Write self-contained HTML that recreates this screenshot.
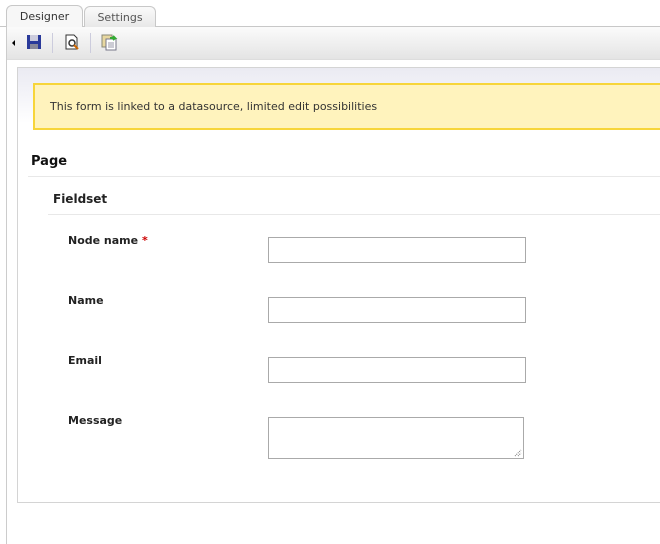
<!DOCTYPE html>
<html><head><style>
body{margin:0;width:660px;height:544px;background:#fff;position:relative;overflow:hidden;font-family:"DejaVu Sans","Liberation Sans",sans-serif;}
.a{position:absolute}
.tab{position:absolute;top:6px;height:20px;border:1px solid #c8c8c8;border-bottom:none;border-radius:6px 6px 0 0;font-size:11px;line-height:22px;text-align:center;color:#444}
.lbl{position:absolute;left:68px;font-size:11px;font-weight:bold;color:#222}
.inp{position:absolute;left:268px;width:256px;height:24px;border:1px solid #aaa;background:#fff}
</style></head><body>
<div class="a" style="left:6px;top:26px;width:1px;height:518px;background:#ccc"></div>
<div class="a" style="left:0;top:26px;width:660px;height:1px;background:#c8c8c8"></div>
<div class="tab" style="left:6px;width:75px;background:#f7f7f7;color:#333;height:21px;top:5px">Designer</div>
<div class="tab" style="left:84px;width:70px;background:linear-gradient(#fafafa,#e8e8e8);color:#555">Settings</div>
<div class="a" style="left:7px;top:27px;width:653px;height:32px;background:linear-gradient(#fbfbfb,#e4e4e4);border-bottom:1px solid #ddd"></div>
<div class="a" style="left:12px;top:40px;width:0;height:0;border-top:3px solid transparent;border-bottom:3px solid transparent;border-right:3px solid #000"></div>
<svg class="a" style="left:26px;top:34px" width="16" height="16"><rect x="1" y="1" width="14" height="14" fill="#2a3a9a"/><rect x="4" y="1" width="8" height="6" fill="#ccd"/><rect x="4" y="10" width="8" height="5" fill="#889"/></svg>
<div class="a" style="left:52px;top:33px;width:1px;height:20px;background:#ccd"></div>
<svg class="a" style="left:64px;top:34px" width="16" height="16"><path d="M2 1h8l3 3v11H2z" fill="#fff" stroke="#333"/><circle cx="8" cy="9" r="3" fill="none" stroke="#333" stroke-width="1.5"/><path d="M10 11l4 4" stroke="#c60" stroke-width="2"/></svg>
<div class="a" style="left:90px;top:33px;width:1px;height:20px;background:#ccd"></div>
<svg class="a" style="left:101px;top:33px" width="18" height="18"><rect x="1" y="2" width="10" height="12" fill="#e8d8a0" stroke="#887"/><rect x="5" y="6" width="10" height="11" fill="#fff" stroke="#778"/><path d="M7 10h6M7 12h6M7 14h6" stroke="#99a"/><path d="M9 5h5l-2-2M14 5l-2 2" stroke="#3a3" stroke-width="2" fill="none"/></svg>
<div class="a" style="left:17px;top:67px;width:643px;height:434px;border-left:1px solid #d4d4d4;border-top:1px solid #d4d4d4;border-bottom:1px solid #d4d4d4;background:linear-gradient(#eaeaf2 0,#fff 55px)"></div>
<div class="a" style="left:33px;top:83px;height:43px;border:2px solid #f7d53a;border-right:none;background:#fff3bd;font-size:11px;line-height:43px;color:#333;padding-left:15px;width:612px">This form is linked to a datasource, limited edit possibilities</div>
<div class="a" style="left:31px;top:153px;font-size:13px;font-weight:bold;color:#111;line-height:18px">Page</div>
<div class="a" style="left:28px;top:176px;width:632px;height:1px;background:#e8e8e8"></div>
<div class="a" style="left:53px;top:191px;font-size:12px;font-weight:bold;color:#222;line-height:16px">Fieldset</div>
<div class="a" style="left:48px;top:214px;width:612px;height:1px;background:#e8e8e8"></div>
<div class="lbl" style="top:234px">Node name <span style="color:#c00">*</span></div>
<div class="inp" style="top:237px"></div>
<div class="lbl" style="top:294px">Name</div>
<div class="inp" style="top:297px"></div>
<div class="lbl" style="top:354px">Email</div>
<div class="inp" style="top:357px"></div>
<div class="lbl" style="top:414px">Message</div>
<div class="inp" style="top:417px;width:254px;height:40px"></div>
<svg class="a" style="left:514px;top:449px" width="8" height="8"><path d="M1 7L7 1M4 7L7 4" stroke="#777" stroke-dasharray="1 1"/></svg>
</body></html>
